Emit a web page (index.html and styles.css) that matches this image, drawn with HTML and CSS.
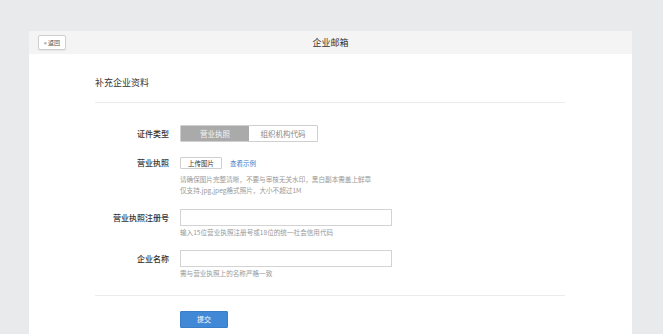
FILE: index.html
```html
<!DOCTYPE html>
<html lang="zh">
<head>
<meta charset="utf-8">
<title>企业邮箱</title>
<link rel="stylesheet" href="styles.css">
</head>
<body>
<div class="page">
  <div class="card">
    <div class="header">
      <div class="header-left"><button class="back">« 返回</button></div>
      <div class="header-title">企业邮箱</div>
      <div class="header-right"></div>
    </div>
    <div class="content">
      <div class="section-title">补充企业资料</div>
      <div class="form">
        <div class="row row-type">
          <div class="label">证件类型</div>
          <div class="field">
            <div class="seg">
              <span class="seg-item active">营业执照</span>
              <span class="seg-item">组织机构代码</span>
            </div>
          </div>
        </div>
        <div class="row row-upload">
          <div class="label">营业执照</div>
          <div class="field">
            <div class="upload-line">
              <button class="upload">上传图片</button>
              <a class="link">查看示例</a>
            </div>
            <div class="help help-upload">请确保图片完整清晰，不要与审核无关水印，黑白副本需盖上鲜章<br>仅支持.jpg,jpeg格式照片，大小不超过1M</div>
          </div>
        </div>
        <div class="row row-reg">
          <div class="label">营业执照注册号</div>
          <div class="field">
            <div class="input"></div>
            <div class="help">输入15位营业执照注册号或18位的统一社会信用代码</div>
          </div>
        </div>
        <div class="row row-name">
          <div class="label">企业名称</div>
          <div class="field">
            <div class="input"></div>
            <div class="help">需与营业执照上的名称严格一致</div>
          </div>
        </div>
      </div>
      <div class="actions">
        <button class="submit">提交</button>
      </div>
    </div>
  </div>
</div>
</body>
</html>
```

FILE: styles.css
```css
html, body {
  margin: 0;
  padding: 0;
  background: #e9eaec;
  font-family: "Noto Sans CJK SC", "Noto Sans", sans-serif;
  color: #333;
}
.page {
  padding: 31px 31px 0 29px;
  width: 603px;
  height: 303px;
  overflow: hidden;
}
.card {
  background: #fff;
  height: 303px;
}
.header {
  height: 23px;
  background: #f4f4f4;
  display: grid;
  grid-template-columns: 1fr auto 1fr;
  align-items: center;
}
.header-left {
  padding-left: 9px;
  display: flex;
  align-items: center;
}
.back {
  width: 28px;
  height: 15px;
  padding: 0;
  margin: 0;
  border: 1px solid #cfcfcf;
  border-radius: 2px;
  background: #fff;
  font-family: inherit;
  font-size: 6px;
  line-height: 13px;
  color: #555;
  box-shadow: 0 1px 1px rgba(0,0,0,0.06);
}
.header-title {
  font-size: 9px;
  line-height: 12px;
  color: #333;
}
.content {
  padding: 0 67px 0 66px;
}
.section-title {
  margin-top: 23px;
  font-size: 9px;
  line-height: 12px;
  padding-bottom: 13px;
  border-bottom: 1px solid #ececec;
  color: #333;
}
.form {
  padding-top: 22px;
  padding-bottom: 16px;
  border-bottom: 1px solid #ececec;
}
.row {
  display: flex;
  gap: 11px;
  align-items: flex-start;
}
.label {
  width: 74px;
  flex: none;
  text-align: right;
  font-size: 8px;
  line-height: 17px;
  color: #333;
  font-weight: 500;
}
.field {
  flex: 1;
  display: flex;
  flex-direction: column;
  align-items: flex-start;
}
.seg {
  display: flex;
  height: 17px;
  border: 1px solid #cfcfcf;
  box-sizing: border-box;
  border-radius: 1px;
}
.seg-item {
  width: 68px;
  text-align: center;
  font-size: 7.5px;
  line-height: 15px;
  color: #888;
  background: #fff;
}
.seg-item.active {
  background: #aaaaaa;
  color: #f4f4f4;
}
.row-upload {
  margin-top: 15px;
}
.row-upload .label {
  line-height: 12px;
}
.upload-line {
  display: flex;
  align-items: center;
  gap: 8px;
  height: 12px;
}
.upload {
  width: 42px;
  height: 12px;
  box-sizing: border-box;
  padding: 0;
  margin: 0;
  border: 1px solid #cfcfcf;
  border-radius: 1px;
  background: #fff;
  font-family: inherit;
  font-size: 6.5px;
  line-height: 10px;
  color: #333;
}
.link {
  font-size: 6.5px;
  line-height: 10px;
  color: #3b7dc4;
}
.help {
  margin-top: 1px;
  font-size: 6.6px;
  line-height: 11px;
  color: #999;
  white-space: nowrap;
}
.help-upload {
  margin-top: 5px;
}
.row-reg {
  margin-top: 13px;
}
.row-name {
  margin-top: 12px;
}
.input {
  width: 212px;
  height: 17px;
  box-sizing: border-box;
  border: 1px solid #d3d3d3;
  background: #fff;
}
.actions {
  display: flex;
  padding-top: 15px;
  padding-left: 85px;
}
.submit {
  width: 48px;
  height: 17px;
  padding: 0;
  margin: 0;
  border: 1px solid #3a7fc6;
  border-radius: 1px;
  background: #4189d6;
  color: #fff;
  font-family: inherit;
  font-size: 7px;
  line-height: 15px;
}
```
